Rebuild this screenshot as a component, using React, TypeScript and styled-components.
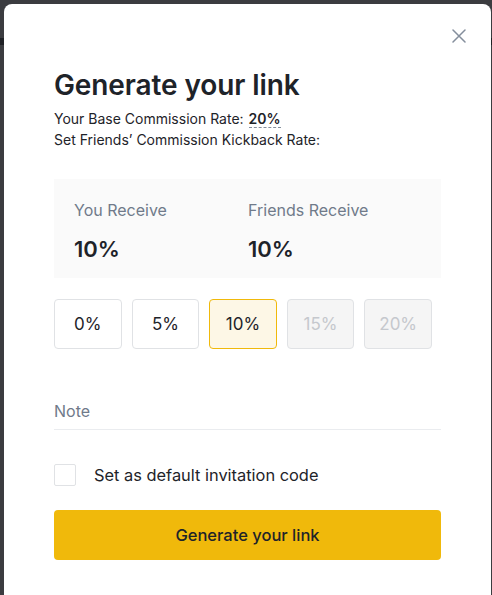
import React, { useState } from "react";
import styled, { createGlobalStyle } from "styled-components";

const GlobalStyle = createGlobalStyle`
  html, body {
    margin: 0;
    padding: 0;
  }
  body {
    height: 595px;
    overflow: hidden;
    background: linear-gradient(
      to bottom,
      #3b3c40 0,
      #3b3c40 38px,
      #1f2125 38px,
      #1f2125 45px,
      #3b3c40 45px
    );
    font-family: Inter, "Noto Sans", sans-serif;
    color: #1e2329;
  }
`;

const Modal = styled.div`
  margin: 4px 0 0 4px;
  width: 487px;
  height: 620px;
  box-sizing: border-box;
  background: #fff;
  border-radius: 8px 8px 0 0;
  padding: 22px 50px 0 50px;
  display: flex;
  flex-direction: column;
`;

const CloseRow = styled.div`
  display: flex;
  justify-content: flex-end;
  margin-right: -28px;
  height: 20px;
`;

const CloseButton = styled.button`
  border: none;
  background: none;
  padding: 0;
  width: 20px;
  height: 20px;
  display: flex;
  align-items: center;
  justify-content: center;
  color: #848e9c;
  cursor: pointer;
`;

const Title = styled.h1`
  margin: 22px 0 0;
  font-size: 28px;
  line-height: 34px;
  font-weight: 600;
  letter-spacing: -0.1px;
  color: #1e2329;
`;

const InfoLine = styled.div`
  font-size: 14px;
  line-height: 20px;
  color: #1e2329;
  display: flex;
  align-items: center;
  gap: 5px;
`;

const InfoBlock = styled.div`
  margin-top: 7px;
  display: flex;
  flex-direction: column;
  gap: 1px;
`;

const Rate = styled.span`
  font-weight: 600;
  border-bottom: 1px dashed #848e9c;
  line-height: 17px;
`;

const SummaryBox = styled.div`
  margin-top: 29px;
  height: 99px;
  background: #fafafa;
  padding: 20px 20px 0;
  box-sizing: border-box;
  display: grid;
  grid-template-columns: 174px 1fr;
`;

const SummaryCol = styled.div`
  display: flex;
  flex-direction: column;
  gap: 14px;
`;

const SummaryLabel = styled.div`
  font-size: 16px;
  line-height: 22px;
  color: #707a8a;
`;

const SummaryValue = styled.div`
  font-size: 22px;
  line-height: 28px;
  font-weight: 600;
  color: #1e2329;
`;

const Options = styled.div`
  margin-top: 21px;
  display: flex;
  gap: 10px;
`;

const Option = styled.button<{ $active?: boolean; $disabled?: boolean }>`
  width: 67.6px;
  height: 50px;
  box-sizing: border-box;
  border-radius: 4px;
  font-family: inherit;
  font-size: 17px;
  font-weight: 400;
  padding: 0;
  border: 1px solid
    ${(p) => (p.$active ? "#f0b90b" : "#e0e2e5")};
  background: ${(p) =>
    p.$active ? "#fdf7e6" : p.$disabled ? "#f5f5f5" : "#fff"};
  color: ${(p) => (p.$disabled ? "#c5c8cd" : "#1e2329")};
  cursor: ${(p) => (p.$disabled ? "not-allowed" : "pointer")};
`;

const NoteField = styled.div`
  margin-top: 51px;
  height: 30px;
  box-sizing: border-box;
  padding-top: 0;
  border-bottom: 1px solid #eaecef;
  font-size: 16px;
  line-height: 22px;
  color: #707a8a;
`;

const CheckRow = styled.label`
  margin-top: 34px;
  display: flex;
  align-items: center;
  gap: 18px;
  font-size: 16.4px;
  color: #1e2329;
  cursor: pointer;
`;

const CheckBox = styled.span<{ $checked: boolean }>`
  width: 22px;
  height: 22px;
  box-sizing: border-box;
  border: 1px solid #e0e2e5;
  border-radius: 2px;
  background: ${(p) => (p.$checked ? "#f0b90b" : "#fff")};
`;

const SubmitButton = styled.button`
  margin-top: 24px;
  height: 50px;
  width: 100%;
  border: none;
  border-radius: 4px;
  background: #f0b90b;
  font-family: inherit;
  font-size: 16.5px;
  font-weight: 500;
  color: #1e2329;
  cursor: pointer;
`;

const OPTIONS = [
  { label: "0%", disabled: false },
  { label: "5%", disabled: false },
  { label: "10%", disabled: false },
  { label: "15%", disabled: true },
  { label: "20%", disabled: true },
];

const App: React.FC = () => {
  const [selected, setSelected] = useState("10%");
  const [isDefault, setIsDefault] = useState(false);

  return (
    <>
      <GlobalStyle />
      <Modal>
        <CloseRow>
          <CloseButton aria-label="Close">
            <svg width="14" height="14" viewBox="0 0 14 14" fill="none">
              <path
                d="M1 1L13 13M13 1L1 13"
                stroke="currentColor"
                strokeWidth="1.5"
                strokeLinecap="round"
              />
            </svg>
          </CloseButton>
        </CloseRow>
        <Title>Generate your link</Title>
        <InfoBlock>
          <InfoLine>
            Your Base Commission Rate: <Rate>20%</Rate>
          </InfoLine>
          <InfoLine>Set Friends’ Commission Kickback Rate:</InfoLine>
        </InfoBlock>

        <SummaryBox>
          <SummaryCol>
            <SummaryLabel>You Receive</SummaryLabel>
            <SummaryValue>10%</SummaryValue>
          </SummaryCol>
          <SummaryCol>
            <SummaryLabel>Friends Receive</SummaryLabel>
            <SummaryValue>10%</SummaryValue>
          </SummaryCol>
        </SummaryBox>

        <Options>
          {OPTIONS.map((o) => (
            <Option
              key={o.label}
              $active={selected === o.label}
              $disabled={o.disabled}
              onClick={() => !o.disabled && setSelected(o.label)}
            >
              {o.label}
            </Option>
          ))}
        </Options>

        <NoteField>Note</NoteField>

        <CheckRow onClick={() => setIsDefault(!isDefault)}>
          <CheckBox $checked={isDefault} />
          Set as default invitation code
        </CheckRow>

        <SubmitButton>Generate your link</SubmitButton>
      </Modal>
    </>
  );
};

export default App;
